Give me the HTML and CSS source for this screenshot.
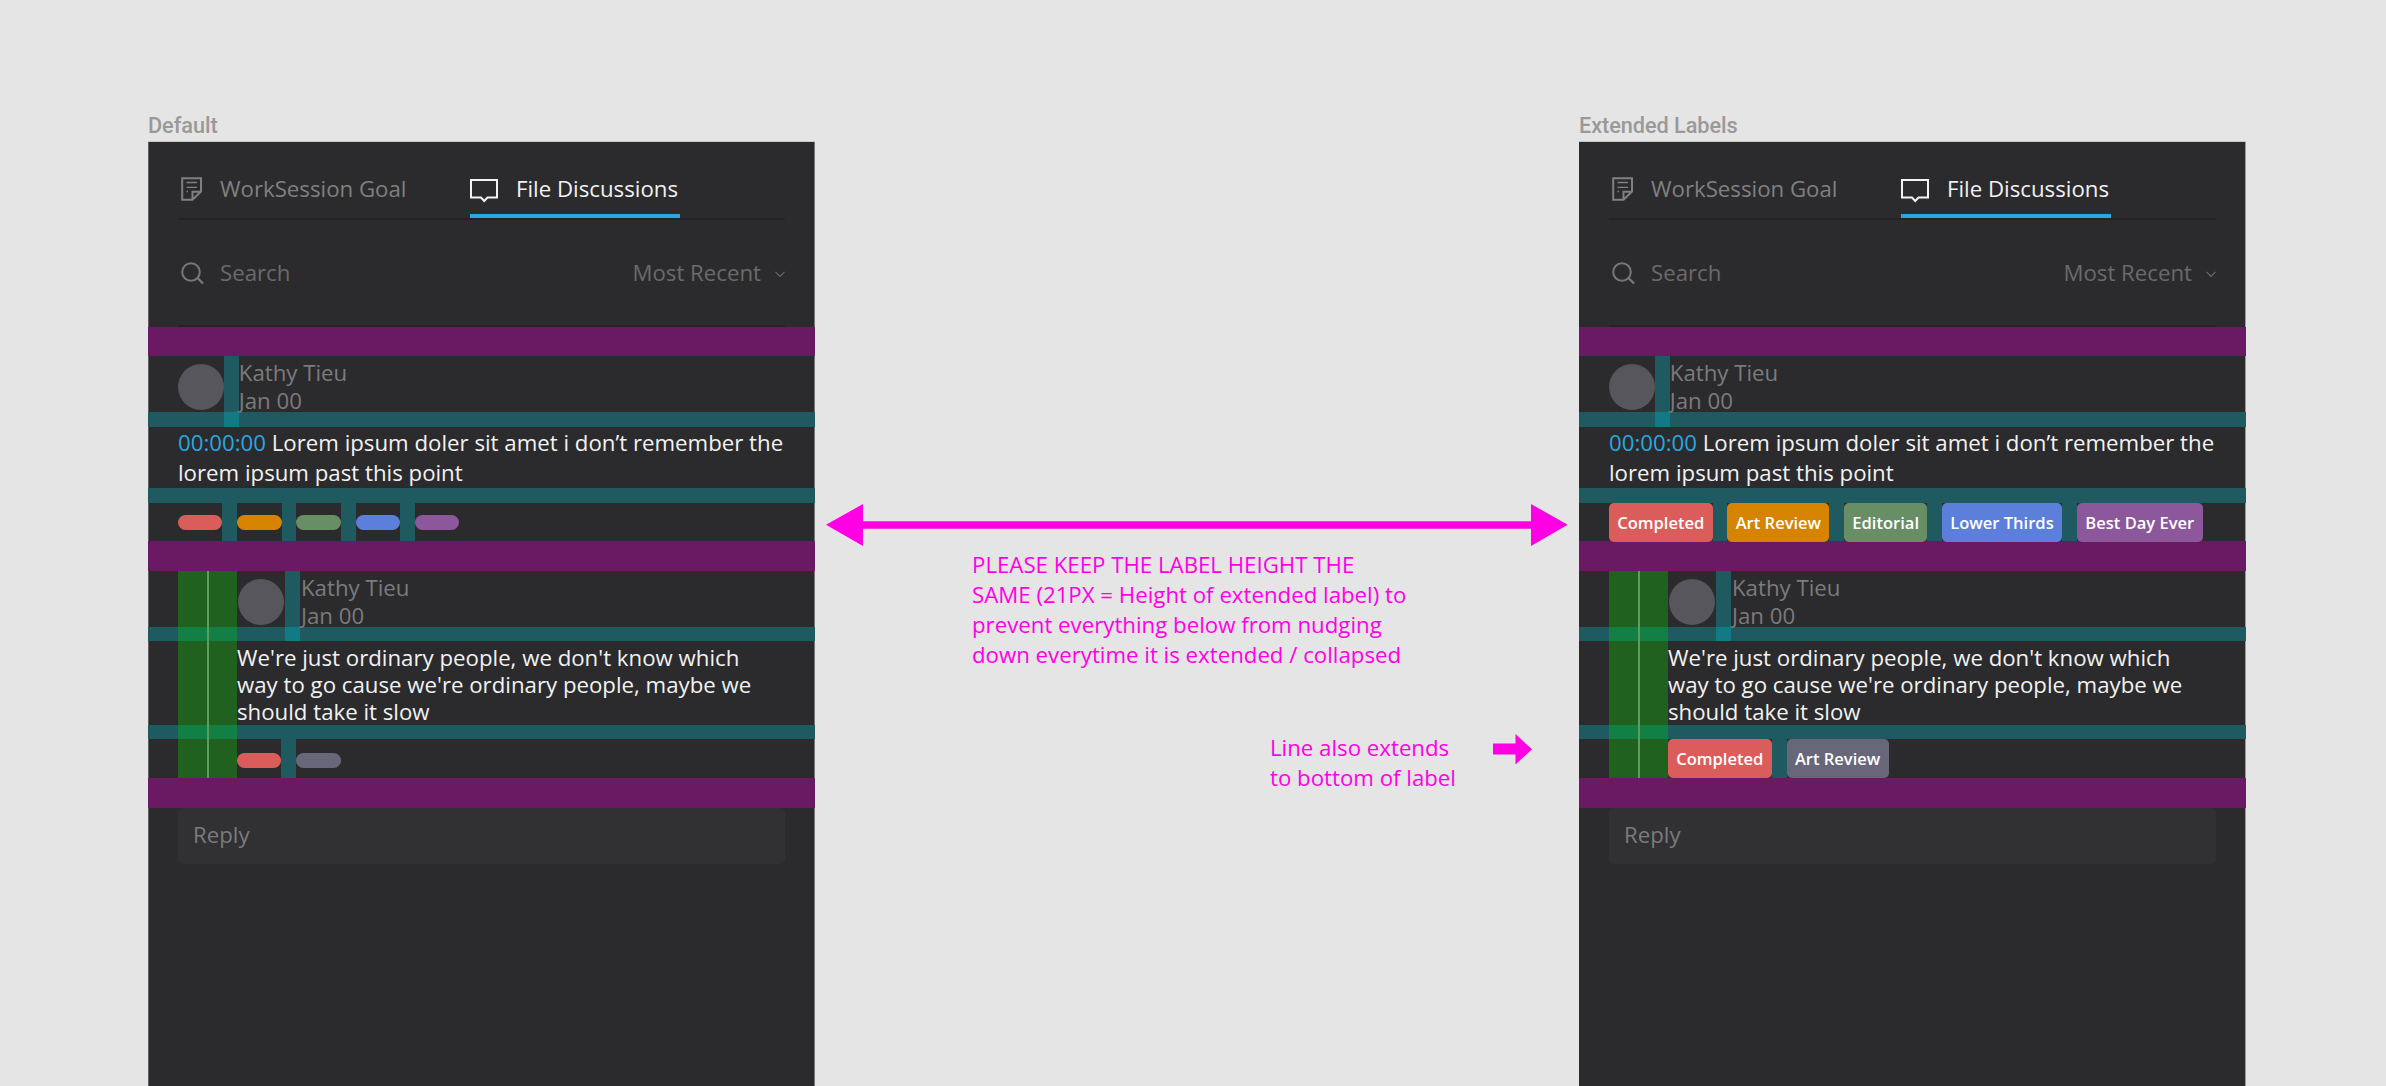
FILE: index.html
```html
<!DOCTYPE html>
<html lang="en">
<head>
<meta charset="utf-8">
<title>Discussion label spacing</title>
<link rel="stylesheet" href="styles.css">
</head>
<body>
<svg class="defs" width="0" height="0">
  <symbol id="note" viewBox="0 0 22 24"><path d="M1.2 1.2H20V14.500L11.500 22.800H1.200Z M11.500 22.500V14.800H20" fill="none" stroke="currentColor" stroke-width="2"/><path d="M5.500 5.500H16M5.500 10.300H16M5.500 14.500H7" fill="none" stroke="currentColor" stroke-width="1.300"/></symbol>
  <symbol id="bubble" viewBox="0 0 28 24"><path d="M1 1H27V18.500H17.500L14.200 22L11 18.500H1Z" fill="none" stroke="currentColor" stroke-width="2"/></symbol>
  <symbol id="search" viewBox="0 0 23 23"><circle cx="10" cy="10" r="8.800" fill="none" stroke="currentColor" stroke-width="2"/><path d="M16 15.500L22 21.500" stroke="currentColor" stroke-width="2.400"/></symbol>
  <symbol id="chevron" viewBox="0 0 10 7"><path d="M.5 .8L5 5.300L9.500 .8" fill="none" stroke="currentColor" stroke-width="1.200"/></symbol>
</svg>
<main class="canvas">
  <section class="frame">
    <h2 class="frame-title">Default</h2>
    <div class="panel panel-default">
      <nav class="tabs">
        <div class="tab tab-goal"><svg class="ic-note"><use href="#note"/></svg><span>WorkSession Goal</span></div>
        <div class="tab tab-active"><svg class="ic-bubble"><use href="#bubble"/></svg><span>File Discussions</span></div>
      </nav>
      <div class="filter">
        <svg class="ic-search"><use href="#search"/></svg><span class="search-text">Search</span>
        <span class="sort">Most Recent</span><svg class="ic-chevron"><use href="#chevron"/></svg>
      </div>
      <div class="gap-large first"></div>
      <article class="comment">
        <header class="author"><i class="avatar"></i><i class="gap-col"></i><p class="name">Kathy Tieu<br>Jan 00</p></header>
        <div class="gap-small"><i class="cross"></i></div>
        <p class="message"><span class="time">00:00:00</span> Lorem ipsum doler sit amet i don’t remember the<br>lorem ipsum past this point</p>
        <div class="gap-small"></div>
        <div class="labels">
          <i class="pill red"></i><i class="gap-col"></i><i class="pill orange"></i><i class="gap-col"></i><i class="pill green"></i><i class="gap-col"></i><i class="pill blue"></i><i class="gap-col"></i><i class="pill violet"></i>
        </div>
      </article>
      <div class="gap-large"></div>
      <article class="comment reply">
        <header class="author"><i class="rail"></i><i class="avatar"></i><i class="gap-col"></i><p class="name">Kathy Tieu<br>Jan 00</p></header>
        <div class="gap-small"><i class="rail"></i><i class="cross"></i></div>
        <div class="message-row"><i class="rail"></i><p class="message">We're just ordinary people, we don't know which<br>way to go cause we're ordinary people, maybe we<br>should take it slow</p></div>
        <div class="gap-small"><i class="rail"></i></div>
        <div class="labels"><i class="rail"></i><i class="pill red"></i><i class="gap-col"></i><i class="pill grey"></i></div>
      </article>
      <div class="gap-large"></div>
      <div class="reply-box">Reply</div>
    </div>
  </section>

  <section class="notes">
    <svg class="span-arrow" viewBox="0 0 742 42"><path d="M0 20.800L37 0V17.200H705V0L741.700 20.800L705 42V24.800H37V42Z" fill="#ff00e4"/></svg>
    <p class="note note-height">PLEASE KEEP THE LABEL HEIGHT THE<br>SAME (21PX = Height of extended label) to<br>prevent everything below from nudging<br>down everytime it is extended / collapsed</p>
    <div class="note-line">
      <p class="note">Line also extends<br>to bottom of label</p>
      <svg class="short-arrow" viewBox="0 0 39 31"><path d="M0 9.500H22.500V0L39 15.300L22.500 30.500V20.500H0Z" fill="#ff00e4"/></svg>
    </div>
  </section>

  <section class="frame">
    <h2 class="frame-title">Extended Labels</h2>
    <div class="panel panel-extended">
      <nav class="tabs">
        <div class="tab tab-goal"><svg class="ic-note"><use href="#note"/></svg><span>WorkSession Goal</span></div>
        <div class="tab tab-active"><svg class="ic-bubble"><use href="#bubble"/></svg><span>File Discussions</span></div>
      </nav>
      <div class="filter">
        <svg class="ic-search"><use href="#search"/></svg><span class="search-text">Search</span>
        <span class="sort">Most Recent</span><svg class="ic-chevron"><use href="#chevron"/></svg>
      </div>
      <div class="gap-large first"></div>
      <article class="comment">
        <header class="author"><i class="avatar"></i><i class="gap-col"></i><p class="name">Kathy Tieu<br>Jan 00</p></header>
        <div class="gap-small"><i class="cross"></i></div>
        <p class="message"><span class="time">00:00:00</span> Lorem ipsum doler sit amet i don’t remember the<br>lorem ipsum past this point</p>
        <div class="gap-small"></div>
        <div class="labels">
          <span class="chip completed red">Completed</span><i class="gap-col"></i><span class="chip art orange">Art Review</span><i class="gap-col"></i><span class="chip editorial green">Editorial</span><i class="gap-col"></i><span class="chip thirds blue">Lower Thirds</span><i class="gap-col"></i><span class="chip best violet">Best Day Ever</span>
        </div>
      </article>
      <div class="gap-large"></div>
      <article class="comment reply">
        <header class="author"><i class="rail"></i><i class="avatar"></i><i class="gap-col"></i><p class="name">Kathy Tieu<br>Jan 00</p></header>
        <div class="gap-small"><i class="rail"></i><i class="cross"></i></div>
        <div class="message-row"><i class="rail"></i><p class="message">We're just ordinary people, we don't know which<br>way to go cause we're ordinary people, maybe we<br>should take it slow</p></div>
        <div class="gap-small"><i class="rail"></i></div>
        <div class="labels"><i class="rail"></i><span class="chip completed red">Completed</span><i class="gap-col"></i><span class="chip art grey">Art Review</span></div>
      </article>
      <div class="gap-large"></div>
      <div class="reply-box">Reply</div>
    </div>
  </section>
</main>
</body>
</html>
```
FILE: styles.css
```css
* { box-sizing: border-box; }
body, p, h2 { margin: 0; }
body {
  background: #e5e5e5;
  font-family: "Open Sans", "Noto Sans", sans-serif;
  font-size: 22.240px;
  white-space: nowrap;
  overflow: hidden;
}
i, svg { display: block; flex: none; }
.defs { position: absolute; }
.canvas { display: flex; height: 1086px; padding-left: 148px; overflow: hidden; }
.frame { width: 667px; flex: none; display: flex; flex-direction: column; }
.frame-title {
  height: 141px;
  padding-top: 113px;
  font: 500 21.700px/26px Roboto, sans-serif;
  letter-spacing: -.05px;
  color: #999;
}
.panel {
  flex: 1;
  background: #2b2b2d;
  border-top: 1px solid #c6c6c6;
}
.panel-default { box-shadow: inset 1px 0 #626264, inset -1px 0 #747476; }
.panel-extended { box-shadow: inset -1px 0 #9b9b9c; }

/* Tabs and filter */
.tabs {
  height: 78px;
  margin: 0 30px;
  display: flex;
  border-bottom: 2px solid #232325;
}
.tab { display: flex; height: 76px; color: #808082; line-height: 30px; }
.tab span { padding-top: 32px; }
.tab-goal { width: 292px; padding-left: 3px; }
.ic-note { width: 22px; height: 24px; margin: 35px 17px 0 0; }
.tab-active { width: 210px; color: #f2f2f2; border-bottom: 4px solid #27a9e0; }
.ic-bubble { width: 28px; height: 24px; margin: 37px 18px 0 0; }
.filter {
  height: 107px;
  margin: 0 30px;
  display: flex;
  line-height: 30px;
  color: #6a6a6c;
  border-bottom: 2px solid #232325;
}
.filter span { padding-top: 38px; }
.ic-search { width: 23px; height: 23px; margin: 42px 16px 0 3px; color: #77777a; }
.sort { margin-left: auto; }
.ic-chevron { width: 10px; height: 7px; margin: 51px 0 0 14px; }

/* Spacing guides */
.gap-large { height: 30px; background: #6a1a63; }
.gap-large.first { height: 29px; }
.gap-small { height: 15px; background: #1f5a61; padding-left: 30px; display: flex; }
.gap-col { width: 14.800px; align-self: stretch; background: #1f5a61; }
.cross { width: 15px; margin-left: 46px; background: #117a84; }
.rail {
  width: 59px;
  align-self: stretch;
  background: linear-gradient(to right, transparent 29px, #5b9f5c 29px 30.500px, transparent 30.500px) #20611f;
}
.gap-small .rail { background-color: #128045; }

/* Comments */
.author { height: 56px; padding-left: 30px; display: flex; }
.avatar { width: 46px; height: 46px; margin-top: 8px; border-radius: 50%; background: #57565c; }
.name { color: #7b7b7d; line-height: 27.700px; padding-top: 2.900px; }
.message { height: 61px; padding-left: 30px; line-height: 29.700px; padding-top: .9px; color: #f2f2f2; }
.time { color: #27a9e0; }
.labels { height: 38px; padding-left: 30px; display: flex; align-items: center; }
.pill { width: 44.400px; height: 15px; border-radius: 8px; }
.chip {
  height: 39px;
  border-radius: 5px;
  flex: none;
  color: #fff;
  font-size: 16.550px;
  font-weight: 600;
  line-height: 39px;
  text-align: center;
}
.completed { width: 103.600px; }
.art { width: 102px; }
.editorial { width: 83px; }
.thirds { width: 120px; }
.best { width: 126px; }
.red { background: #db5d5b; }
.orange { background: #d68400; }
.green { background: #688e66; }
.blue { background: #5c7fdb; }
.violet { background: #8d589b; }
.grey { background: #68677a; }

.reply .avatar { margin-left: 1px; }
.reply .gap-col { width: 15px; }
.reply .author .name { margin-left: 1px; }
.reply .author .gap-col { margin-left: 1px; }
.reply .gap-small { height: 14px; }
.reply .cross { margin-left: 48px; }
.message-row { display: flex; height: 84px; padding-left: 30px; }
.message-row .message { height: auto; padding: 3px 0 0; line-height: 27px; }
.reply .labels { height: 39px; }
.reply .pill { margin-top: 3px; }
.reply-box {
  height: 56px;
  margin: 0 30px;
  padding: 12px 15px;
  line-height: 30px;
  color: #7b7b7d;
  background: #313133;
  border-radius: 5px;
}

/* Annotations */
.notes { width: 764px; flex: none; padding: 504px 0 0 11px; color: #ff00e4; }
.span-arrow { width: 742px; height: 42px; }
.note { line-height: 30.300px; }
.note-height { margin: 3.500px 0 0 146px; }
.note-line { display: flex; margin: 62px 0 0 444px; }
.note-line .note { width: 223px; }
.short-arrow { width: 39px; height: 31px; margin-top: 1px; }
```
